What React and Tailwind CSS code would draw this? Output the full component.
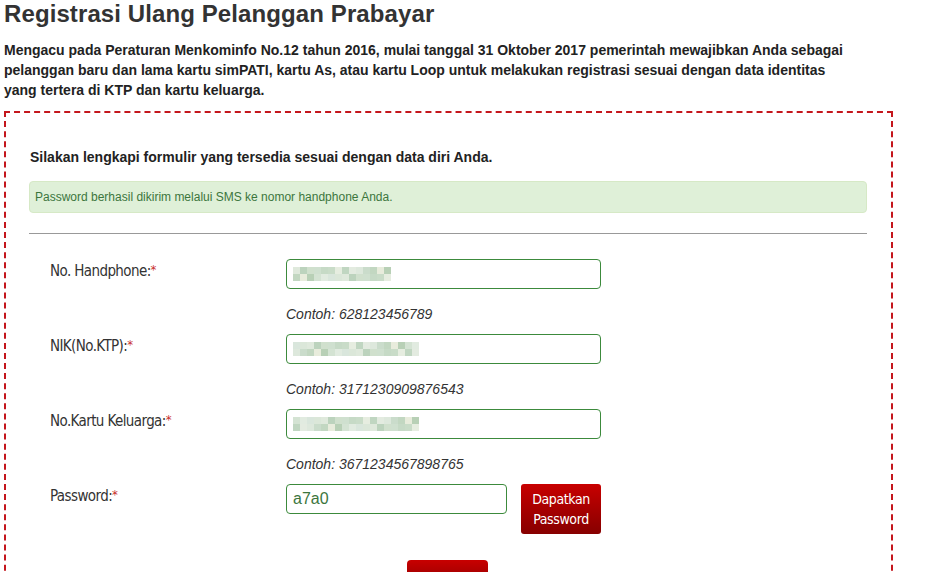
import React from 'react';

const blurA = ['#c9dcc8', '#dfe9dc', '#b8d0b6', '#e3ebe0', '#cfe0cf', '#d9e6dc', '#c2d7c1', '#e6ede0', '#bcd3bd', '#d4e3d3', '#dde8dc', '#c6dac6', '#dbe7d9', '#e8ecdc', '#c0d6c1', '#d0e0cd', '#e1ebe0', '#cadccb'];

function Blur({ n, seed }) {
  return (
    <div className="flex flex-col">
      {[0, 1].map((r) => (
        <div key={r} className="flex h-[7px]">
          {Array.from({ length: n }).map((_, i) => (
            <div
              key={i}
              className="w-[7px] h-[7px]"
              style={{ backgroundColor: blurA[(i * 7 + seed + r * 5) % blurA.length] }}
            />
          ))}
        </div>
      ))}
    </div>
  );
}

const labelFont = { fontFamily: '"DejaVu Sans Condensed", "Roboto Condensed", "Liberation Sans Narrow", sans-serif' };

function Row({ label, example, children, last }) {
  return (
    <div className="flex">
      <div className="w-[257px] pl-[21px] pt-[1px] text-[15px] text-[#333] tracking-[-0.6px]" style={labelFont}>
        {label}:<span className="text-[#c9302c] align-top text-[13px]">*</span>
      </div>
      <div className="flex flex-col">
        {children}
        {!last && (
          <div className="italic text-[14px] text-[#333] mt-[15px] mb-[10px] leading-[20px]">Contoh: {example}</div>
        )}
      </div>
    </div>
  );
}

function Input({ seed, n }) {
  return (
    <div className="w-[315px] h-[30px] border border-[#3c8a3c] rounded-[4px] flex items-center px-[6px] bg-white">
      <Blur n={n} seed={seed} />
    </div>
  );
}

export default function App() {
  return (
    <div className="w-[942px] h-[572px] overflow-hidden bg-white" style={{ fontFamily: '"Liberation Sans", Arial, sans-serif' }}>
      <div className="px-[4px]">
        <h1 className="text-[24px] font-bold text-[#333] leading-[28px] tracking-[0.1px]">Registrasi Ulang Pelanggan Prabayar</h1>
        <p className="mt-[12px] text-[14px] font-bold text-[#222] leading-[20px] w-[890px]">
          Mengacu pada Peraturan Menkominfo No.12 tahun 2016, mulai tanggal 31 Oktober 2017 pemerintah mewajibkan Anda sebagai<br />
          pelanggan baru dan lama kartu simPATI, kartu As, atau kartu Loop untuk melakukan registrasi sesuai dengan data identitas<br />
          yang tertera di KTP dan kartu keluarga.
        </p>
        <div className="mt-[11px] w-[889px] border-2 border-dashed border-[#c4161c] border-b-0 h-[500px] pl-[23px] pr-[23px] pt-[34px]">
          <p className="text-[14px] font-bold text-[#222] leading-[20px] pl-[1px]">Silakan lengkapi formulir yang tersedia sesuai dengan data diri Anda.</p>
          <div className="mt-[14px] w-[838px] h-[32px] bg-[#dff0d8] border border-[#d6e9c6] rounded-[4px] flex items-center px-[5px] text-[12px] text-[#3c763d]">
            Password berhasil dikirim melalui SMS ke nomor handphone Anda.
          </div>
          <div className="mt-[20px] w-[838px] border-t border-[#999]" />
          <div className="mt-[25px]">
            <Row label="No. Handphone" example="628123456789">
              <Input seed={1} n={14} />
            </Row>
            <Row label="NIK(No.KTP)" example="3171230909876543">
              <Input seed={5} n={18} />
            </Row>
            <Row label="No.Kartu Keluarga" example="3671234567898765">
              <Input seed={9} n={18} />
            </Row>
            <Row label="Password" last>
              <div className="flex">
                <div className="w-[221px] h-[30px] border border-[#3c8a3c] rounded-[4px] flex items-center px-[6px] text-[16px] text-[#3c763d]">
                  a7a0
                </div>
                <button
                  className="ml-[14px] w-[80px] h-[50px] rounded-[3px] bg-gradient-to-b from-[#c80000] to-[#870000] text-white text-[14px] leading-[20px] tracking-[-0.4px]"
                  style={labelFont}
                >
                  Dapatkan<br />Password
                </button>
              </div>
            </Row>
            <div className="flex justify-center mt-[26px] pr-[2px]">
              <div className="w-[81px] h-[30px] rounded-t-[4px] bg-gradient-to-b from-[#c80000] to-[#870000]" />
            </div>
          </div>
        </div>
      </div>
    </div>
  );
}
